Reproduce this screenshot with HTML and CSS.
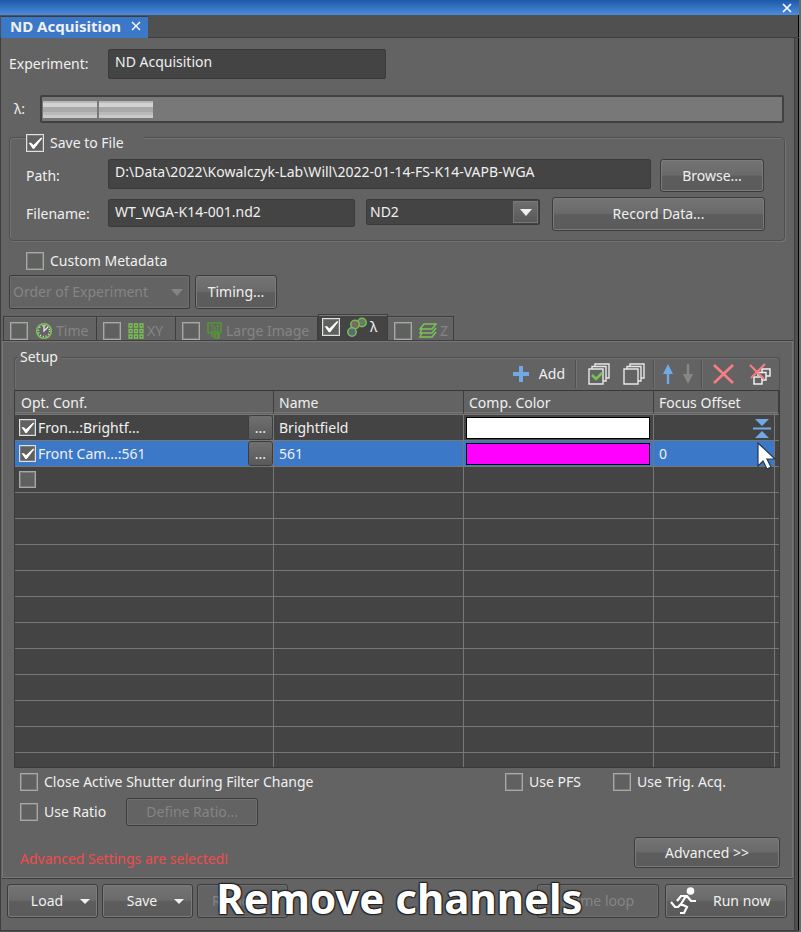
FILE: index.html
```html
<!DOCTYPE html>
<html lang="en">
<head>
<meta charset="utf-8">
<title>ND Acquisition</title>
<link rel="stylesheet" href="styles.css">
</head>
<body>
<div class="window">
  <header class="titlebar">
    <button class="close" aria-label="Close window"><svg width="10" height="10" viewBox="0 0 10 10"><path d="M1 1l8 8M9 1l-8 8"/></svg></button>
  </header>
  <nav class="doc-tabs">
    <div class="doc-tab"><span>ND Acquisition</span>
      <button class="close" aria-label="Close tab"><svg width="10" height="10" viewBox="0 0 10 10"><path d="M1 1l8 8M9 1l-8 8"/></svg></button>
    </div>
  </nav>
  <main class="panel">
    <div class="row experiment">
      <label class="caption" for="experiment">Experiment:</label>
      <input class="field" id="experiment" type="text" value="ND Acquisition">
    </div>
    <div class="row lambda">
      <span class="lambda-label">λ:</span>
      <div class="track"><i></i><i></i></div>
    </div>

    <section class="group save">
      <label class="check legend"><input type="checkbox" checked>Save to File</label>
      <div class="row path">
        <label class="caption" for="path">Path:</label>
        <input class="field grow" id="path" type="text" value="D:\Data\2022\Kowalczyk-Lab\Will\2022-01-14-FS-K14-VAPB-WGA">
        <button class="btn browse">Browse...</button>
      </div>
      <div class="row filename">
        <label class="caption" for="filename">Filename:</label>
        <input class="field grow" id="filename" type="text" value="WT_WGA-K14-001.nd2">
        <div class="select format">
          <select aria-label="File format"><option>ND2</option></select>
          <span class="drop"><svg width="12" height="7" viewBox="0 0 12 7"><path d="M0 0h12L6 7z"/></svg></span>
        </div>
        <button class="btn record">Record Data...</button>
      </div>
    </section>

    <label class="check metadata"><input type="checkbox">Custom Metadata</label>
    <div class="row order">
      <div class="select order-select">
        <select aria-label="Order of Experiment" disabled><option>Order of Experiment</option></select>
        <span class="drop"><svg width="12" height="7" viewBox="0 0 12 7"><path d="M0 0h12L6 7z"/></svg></span>
      </div>
      <button class="btn timing">Timing...</button>
    </div>

    <div class="tabs">
      <label class="tab time"><input type="checkbox">
        <svg width="18" height="18" viewBox="0 0 18 18" fill="none"><circle cx="9" cy="9" r="7.3" stroke="#79c353" stroke-width="1.6"/><circle cx="9" cy="9" r="5.5" stroke="#d9e6d2" stroke-width="1.4" stroke-dasharray="1 1.88"/><path d="M9 3v6l4-4" stroke="#e6e6e6" stroke-width="1.3"/></svg>
        <span>Time</span></label>
      <label class="tab xy"><input type="checkbox">
        <svg width="16" height="16" viewBox="0 0 16 16" fill="none" stroke="#79c353" stroke-width="1.3"><path d="M1 1h3v3H1zM6.500 1h3v3h-3zM12 1h3v3h-3zM1 6.500h3v3H1zM6.500 6.500h3v3h-3zM12 6.500h3v3h-3zM1 12h3v3H1zM6.500 12h3v3h-3zM12 12h3v3h-3z"/></svg>
        <span>XY</span></label>
      <label class="tab large"><input type="checkbox">
        <svg width="16" height="17" viewBox="0 0 16 17" fill="none" stroke="#549638"><path d="M1 11V1h13v10M1 11h5M11 11h3" stroke-width="1.600"/><path d="M3 4h2M6 4h2M9 4h3M3 7h1M5 6h3M10 7h2M4 9h3M9 9h3M5 2v3M8 5v4M11 3v4"/><path d="M5 9v5h2M7 12v-2h4v3M7 12h4v4M8 12h4v4H8z" stroke-width="1.400"/></svg>
        <span>Large Image</span></label>
      <label class="tab active"><input type="checkbox" checked>
        <svg width="20" height="20" viewBox="0 0 20 20" stroke="#76bd51" stroke-width="1.500"><circle cx="15" cy="5.500" r="4.200" fill="#677b60"/><circle cx="8" cy="7.500" r="4.200" fill="#7b6964"/><circle cx="5" cy="15" r="4.200" fill="#5d6979"/></svg>
        <span>λ</span></label>
      <label class="tab z"><input type="checkbox">
        <svg width="18" height="16" viewBox="0 0 18 16" fill="none" stroke="#79c353" stroke-width="1.500"><path d="M5 1h12l-4 5H1zM3 6L1 10h12l4-5M3 10l-2 4h12l4-5"/></svg>
        <span>Z</span></label>
    </div>

    <section class="pane">
      <div class="setup">
        <h2>Setup</h2>
        <div class="toolbar">
          <button class="tool add"><svg width="18" height="18" viewBox="0 0 18 18" fill="#70a9e5"><path d="M7 1h4v6h6v4h-6v6H7v-6H1V7h6z"/></svg>Add</button>
          <i class="sep"></i>
          <button class="tool checkall" aria-label="Select all"><svg width="22" height="22" viewBox="0 0 22 22" fill="none" stroke="#e8e8e8" stroke-width="1.400"><path d="M1 6h14v15H1zM4 6V3.500h14V18h-3M7 3V1h14v14h-3"/><path d="M4 12l4 4 6-6" stroke="#79c353" stroke-width="2.500"/></svg></button>
          <button class="tool uncheck" aria-label="Deselect all"><svg width="22" height="22" viewBox="0 0 22 22" fill="none" stroke="#e8e8e8" stroke-width="1.400"><path d="M1 6h14v15H1zM4 6V3.500h14V18h-3M7 3V1h14v14h-3"/></svg></button>
          <i class="sep"></i>
          <button class="tool up" aria-label="Move up"><svg width="10" height="20" viewBox="0 0 10 20" fill="#70a9e5"><path d="M5 0l5 10H6.200v10H3.800V10H0z"/></svg></button>
          <button class="tool down" aria-label="Move down" disabled><svg width="10" height="20" viewBox="0 0 10 20" fill="#858883"><path d="M5 20l5-10H6.200V0H3.800v10H0z"/></svg></button>
          <i class="sep"></i>
          <button class="tool remove" aria-label="Remove"><svg width="22" height="20" viewBox="0 0 22 20" fill="none" stroke="#f77f83" stroke-width="2.600"><path d="M1 1l19 18M20 1L1 19"/></svg></button>
          <button class="tool clear" aria-label="Remove all"><svg width="22" height="22" viewBox="0 0 22 22" fill="none"><g stroke="#f0f0f0" stroke-width="1.500"><path d="M13 9V6h8v7h-4M9 13V9.500h8V17h-4"/><path d="M5 14h8v7H5z"/></g><path d="M1 2l14 14M16 1L2 15" stroke="#f77f83" stroke-width="2"/></svg></button>
        </div>
      </div>
      <div class="grid">
      <table>
        <colgroup><col class="c1"><col class="c2"><col class="c3"><col><col class="c5"></colgroup>
        <thead><tr><th>Opt. Conf.</th><th>Name</th><th>Comp. Color</th><th colspan="2">Focus Offset</th></tr></thead>
        <tbody>
          <tr><td><div class="conf"><label><input type="checkbox" checked>Fron...:Brightf...</label><button class="more">...</button></div></td><td>Brightfield</td><td class="color"><div class="swatch white"></div></td>
            <td><div class="offset"><svg width="18" height="19" viewBox="0 0 18 19" fill="#70a9e5"><path d="M2 0h14L9 7zM0 8.500h18v2H0zM9 12l7 7H2z"/></svg></div></td><td></td></tr>
          <tr class="selected"><td><div class="conf"><label><input type="checkbox" checked>Front Cam...:561</label><button class="more">...</button></div></td><td>561</td><td class="color"><div class="swatch magenta"></div></td>
            <td><div class="offset">0<svg class="pointer" width="20" height="28" viewBox="0 0 20 28"><path d="M1 1v23l5-5 4 8 4-2-4-8h8z" fill="#fff" stroke="#26364f" stroke-width="1.200"/></svg></div></td><td></td></tr>
          <tr><td><div class="conf"><label><input type="checkbox" aria-label="Enable channel"></label></div></td><td></td><td></td><td></td><td></td></tr>
          <tr><td></td><td></td><td></td><td></td><td></td></tr>
          <tr><td></td><td></td><td></td><td></td><td></td></tr>
          <tr><td></td><td></td><td></td><td></td><td></td></tr>
          <tr><td></td><td></td><td></td><td></td><td></td></tr>
          <tr><td></td><td></td><td></td><td></td><td></td></tr>
          <tr><td></td><td></td><td></td><td></td><td></td></tr>
          <tr><td></td><td></td><td></td><td></td><td></td></tr>
          <tr><td></td><td></td><td></td><td></td><td></td></tr>
          <tr><td></td><td></td><td></td><td></td><td></td></tr>
          <tr><td></td><td></td><td></td><td></td><td></td></tr>
          <tr class="last"><td></td><td></td><td></td><td></td><td></td></tr>
        </tbody>
      </table>
      </div>
      <div class="options">
        <label class="check shutter"><input type="checkbox">Close Active Shutter during Filter Change</label>
        <label class="check pfs"><input type="checkbox">Use PFS</label>
        <label class="check trig"><input type="checkbox">Use Trig. Acq.</label>
      </div>
      <div class="ratio">
        <label class="check"><input type="checkbox">Use Ratio</label>
        <button class="btn define" disabled>Define Ratio...</button>
      </div>
      <div class="advanced">
        <p>Advanced Settings are selected!</p>
        <button class="btn adv">Advanced &gt;&gt;</button>
      </div>
    </section>

    <footer class="actions">
      <button class="btn menu"><span>Load</span><svg width="10" height="5" viewBox="0 0 10 5"><path d="M0 0h10L5 5z"/></svg></button>
      <button class="btn menu"><span>Save</span><svg width="10" height="5" viewBox="0 0 10 5"><path d="M0 0h10L5 5z"/></svg></button>
      <button class="btn menu plain" disabled>Remove</button>
      <button class="btn loop" disabled>1 time loop</button>
      <button class="btn run"><svg width="27" height="28" viewBox="0 0 27 28" fill="none" stroke="#fff" stroke-width="2.200"><circle cx="20.500" cy="4" r="3.800" fill="#fff" stroke="none"/><path d="M26 14h-5l-4-5h-6l-4 5M16 9l-5 8 6 3-3 6h-4M11 17l-3 3H5l-4-5"/></svg><span>Run now</span></button>
      <div class="subtitle">Remove channels</div>
    </footer>
  </main>
</div>
</body>
</html>
```
FILE: styles.css
```css
* { box-sizing: border-box; }
body {
  margin: 0;
  background: #505050;
  color: #f0f0f0;
  font: 14px/18px "Noto Sans", sans-serif;
}
button, input, select { font: inherit; color: inherit; margin: 0; }
button { padding: 0; }
svg { display: block; flex: none; }
.window {
  min-height: 100vh;
  display: flex;
  flex-direction: column;
  border-right: 2px solid #6a6a6a;
}
.titlebar {
  height: 15px;
  display: flex;
  justify-content: flex-end;
  align-items: center;
  padding-right: 7px;
  background: linear-gradient(#1d59a8, #4c8cde);
}
.close { background: none; border: 0; }
.close svg { stroke: #fff; stroke-width: 1.6; }
.doc-tabs { height: 22px; padding: 1px 0 0 1px; border-right: 1px solid #000; }
.doc-tab {
  width: 147px;
  height: 22px;
  position: relative;
  z-index: 1;
  display: flex;
  justify-content: space-between;
  align-items: center;
  padding: 0 7px 3px 9px;
  background: #3c78c8;
  border-top: 1px solid #3c3c3c;
  font-size: 15px;
  font-weight: bold;
}
.doc-tab .close svg { stroke-width: 1.4; }
.panel {
  flex: 1;
  display: flex;
  flex-direction: column;
  margin-bottom: 1px;
  border: 1px solid #3e3e3e;
  border-right: 0;
  background: #636363;
  box-shadow: inset -1px 0 #000, inset -4px 0 #505050, inset -5px 0 #3e3e3e;
  padding-right: 5px;
}
.row { display: flex; align-items: center; }
.grow { flex: 1; min-width: 0; }
.field {
  height: 30px;
  padding: 0 6px 6px;
  background: #444;
  border: 1px solid #3a3a3a;
  border-radius: 2px;
}
.experiment { padding: 11px 0 0 8px; }
.experiment .caption { width: 99px; }
.experiment .field { width: 278px; }
.lambda { padding: 16px 10px 0 13px; }
.lambda-label { width: 26px; }
.track {
  flex: 1;
  height: 28px;
  display: flex;
  gap: 2px;
  padding: 4px 1px 3px;
  border: 2px solid #414141;
  border-radius: 2px;
  background: #787878;
}
.track i { width: 54px; height: 17px; background: linear-gradient(#b8b8b8 0 2px, #d2d2d2 2px 6px, #a9a9a9 6px 11px, #bababa 11px 14px, #cacaca 14px); }
.btn {
  display: flex;
  align-items: center;
  justify-content: center;
  border: 1px solid #3c3c3c;
  border-radius: 3px;
  background: linear-gradient(#747474, #6a6a6a 48%, #5d5d5d 52%, #5b5b5b);
  box-shadow: inset 0 0 0 1px #7b7b7b;
}
.btn:disabled { background: #636363; color: #858585; box-shadow: inset 0 0 0 1px #6e6e6e; }
.check { display: inline-flex; align-items: center; gap: 6px; }
input[type="checkbox"] {
  appearance: none;
  flex: none;
  width: 18px;
  height: 18px;
  border: 1px solid #a8a8a8;
  box-shadow: inset 0 0 0 1px #7d7d7d;
  background: #5f615f;
}
input[type="checkbox"]:checked { border-color: #e0e0e0; }
input[type="checkbox"]:checked::before {
  content: "";
  display: block;
  height: 100%;
  background: #fff;
  clip-path: polygon(10% 48%, 26% 48%, 40% 62%, 88% 16%, 95% 22%, 45% 86%, 36% 86%);
}
.group { border: 1px solid #505050; border-radius: 4px; box-shadow: inset 1px 1px #737373, 1px 1px #737373; }
.save { margin: 14px 9px 0 8px; height: 104px; padding: 0 20px 0 16px; }
.legend { display: flex; position: relative; top: -4px; height: 18px; width: 118px; background: #636363; }
.path { align-items: flex-start; margin-top: 3px; height: 33px; }
.save .caption { width: 82px; padding-top: 8px; }
.path .btn { width: 104px; height: 33px; margin-left: 9px; }
.filename { margin-top: 5px; height: 34px; align-items: flex-start; }
.filename .field { height: 28px; margin-top: 2px; padding-bottom: 4px; }
.select { position: relative; }
.select select {
  appearance: none;
  width: 100%;
  height: 100%;
  padding: 0 3px;
  border: 1px solid #3a3a3a;
  border-radius: 2px;
  background: #444;
  opacity: 1;
}
.drop { position: absolute; right: 2px; top: 2px; bottom: 2px; width: 25px; display: grid; place-items: center; pointer-events: none; fill: #f0f0f0; }
.format { width: 174px; height: 26px; margin: 2px 12px 0 11px; }
.format .drop { border: 1px solid #777; background: linear-gradient(#6e6e6e, #595959); }
.record { width: 213px; height: 34px; margin-right: -1px; }
.metadata { margin: 11px 0 0 25px; align-self: flex-start; }
.order { margin: 5px 0 0 8px; gap: 5px; }
.order-select { width: 181px; height: 34px; }
.order-select select { background: #636363; color: #858585; border-color: #3c3c3c; box-shadow: inset 0 0 0 1px #6e6e6e; }
.order-select .drop { fill: #858585; width: 22px; }
.timing { width: 82px; height: 34px; }
.tabs { display: flex; align-items: flex-end; height: 27px; margin: 5px 0 0 2px; }
.tab {
  display: flex;
  align-items: center;
  height: 25px;
  padding: 3px 0 0 6px;
  border: 1px solid #3e3e3e;
  border-bottom: 0;
  border-left-width: 0;
  box-shadow: inset 0 1px #6c6c6c;
  color: #858585;
}
.tab svg { margin: 0 3px 0 7px; }
.time { width: 94px; border-left-width: 1px; }
.xy { width: 79px; }
.large { width: 142px; }
.active { width: 70px; height: 27px; background: #444; color: #f0f0f0; padding: 0 0 3px 3px; border-left-width: 1px; box-shadow: inset 0 1px #777; }
.z { width: 66px; }
.pane {
  flex: 1;
  display: flex;
  flex-direction: column;
  margin: 0 1px 0 1px;
  padding: 4px 12px 8px 11px;
  border: 1px solid #777;
  box-shadow: 0 1px #3e3e3e, 0 -1px #3e3e3e;
}
.setup { position: relative; margin-top: 11px; border: 1px solid #505050; border-bottom: 0; border-radius: 3px; box-shadow: inset 1px 1px #6f6f6f; height: 33px; }
.setup h2 { position: absolute; left: 3px; top: -10px; margin: 0; padding: 0 3px 0 2px; background: #636363; font: inherit; }
.toolbar { height: 100%; display: flex; justify-content: flex-end; align-items: center; padding-right: 8px; }
.tool { display: flex; align-items: center; gap: 9px; background: none; border: 0; }
.sep { width: 1px; height: 28px; background: #505050; box-shadow: 1px 0 #737373; }
.add { margin-right: 10px; }
.checkall { margin: 0 13px 0 12px; }
.uncheck { margin-right: 8px; }
.up { margin: 0 10px 0 9px; }
.down { margin-right: 8px; }
.remove { margin: 0 14px 0 11px; }
.grid { background: #444; border: 1px solid #3a3a3a; }
table { width: 100%; table-layout: fixed; border-collapse: separate; border-spacing: 0; }
.c1 { width: 259px; }
.c2, .c3 { width: 190px; }
.c5 { width: 4px; }
th { height: 24px; padding: 2px 0 0 6px; text-align: left; font-weight: normal; background: #636363; border-right: 1px solid #3e3e3e; border-bottom: 3px double #777; }
th + th { padding-left: 5px; }
td { height: 26px; padding: 1px 0 0 5px; border-right: 1px solid #777; border-bottom: 1px solid #777; }
td:last-child { border-right: 0; padding: 0; }
td:first-child { padding: 0 0 0 4px; }
.last td { height: 14px; border-bottom: 0; }
.selected td { background: #3c78c8; }
.selected td:last-child { background: #444; }
.conf { display: flex; align-items: center; justify-content: space-between; height: 25px; }
.conf label { display: flex; align-items: center; gap: 2px; }
.conf input[type="checkbox"] { width: 17px; height: 17px; }
.more { width: 25px; height: 25px; border: 1px solid #7b7b7b; border-radius: 3px; outline: 1px solid #3c3c3c; outline-offset: -1px; background: linear-gradient(#707070, #5a5a5a); }
td.color { padding: 0 3px 0 2px; }
.swatch { height: 22px; border: 1px solid #000; }
.white { background: #fff; }
.magenta { background: #f0f; }
.offset { position: relative; display: flex; align-items: center; height: 24px; }
.offset svg { margin-left: auto; margin-right: 3px; }
.offset .pointer { position: absolute; right: -6px; top: 0; z-index: 1; }
.options { display: flex; align-items: center; margin: 4px 0 0 6px; height: 20px; }
.shutter { margin-right: auto; }
.pfs { width: 78px; }
.trig { width: 118px; margin: 0 49px 0 30px; }
.ratio { display: flex; align-items: center; gap: 20px; margin: 6px 0 0 6px; }
.define { width: 132px; height: 28px; }
.advanced { display: flex; align-items: flex-end; justify-content: space-between; margin: 11px 0 0 6px; }
.advanced p { margin: 0; color: #f34a4c; }
.adv { width: 146px; height: 31px; }
.actions { position: relative; display: flex; gap: 4px; padding: 6px 7px 12px 6px; }
.actions .btn { height: 34px; }
.menu { width: 91px; }
.menu span { margin-left: 16px; }
.menu svg { margin-left: 17px; fill: #f0f0f0; }
.plain { padding-right: 8px; }
.loop { width: 122px; margin-left: auto; margin-right: 2px; padding-right: 2px; }
.run { width: 122px; gap: 16px; justify-content: flex-start; padding-left: 4px; }
.subtitle {
  position: absolute;
  inset: 0 0 0 4px;
  color: #fff;
  font-size: 42px;
  line-height: 40px;
  font-weight: bold;
  text-align: center;
  text-shadow: 1px 1px 1px #222, -1px -1px 1px #222, 1px -1px 1px #222, -1px 1px 1px #222;
}
```
